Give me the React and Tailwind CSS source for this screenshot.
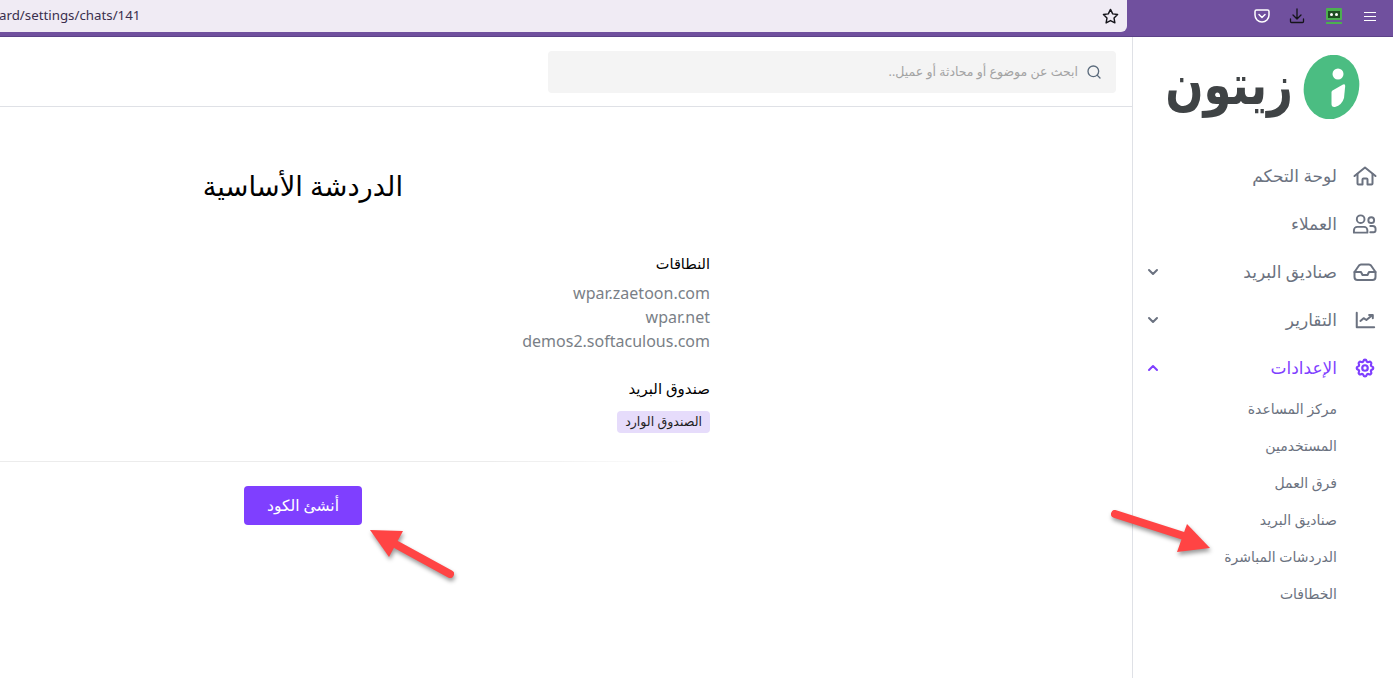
import React from "react";
import { FiSearch, FiStar, FiChevronDown, FiChevronUp } from "react-icons/fi";

function HomeIcon() {
  return (
    <svg width="24" height="20" viewBox="0 0 24 20" fill="none" stroke="currentColor" strokeWidth="2" strokeLinecap="round" strokeLinejoin="round">
      <path d="M1.500 10 12 1.500 22.500 10" />
      <path d="M4.500 8v9.500a1 1 0 0 0 1 1h4v-5a1 1 0 0 1 1-1h3a1 1 0 0 1 1 1v5h4a1 1 0 0 0 1-1V8" />
    </svg>
  );
}

function UsersIcon() {
  return (
    <svg width="26" height="24" viewBox="0 0 26 24" fill="none" stroke="currentColor" strokeWidth="2" strokeLinecap="round" strokeLinejoin="round">
      <circle cx="9" cy="7" r="4" />
      <path d="M2 21v-2.500a3.500 3.500 0 0 1 3.500-3.500h7a3.500 3.500 0 0 1 3.500 3.500V21z" />
      <circle cx="20" cy="8" r="3" />
      <path d="M19 14h2.500a3 3 0 0 1 3 3v1.500a2 2 0 0 1-2 2H19" />
    </svg>
  );
}

function InboxIcon() {
  return (
    <svg width="24" height="24" viewBox="0 0 24 24" fill="none" stroke="currentColor" strokeWidth="2" strokeLinecap="round" strokeLinejoin="round">
      <path d="M1.500 12 6 5.500A3 3 0 0 1 8 4.500h8a3 3 0 0 1 2 1L22.500 12v5a3 3 0 0 1-3 3h-15a3 3 0 0 1-3-3z" />
      <path d="M1.500 12H8l1.500 3h5l1.500-3h6.500" />
    </svg>
  );
}

function ChartIcon() {
  return (
    <svg width="22" height="22" viewBox="0 0 24 24" fill="none" stroke="currentColor" strokeWidth="2.200" strokeLinecap="round" strokeLinejoin="round">
      <path d="M3 4v16h19" />
      <path d="m7 13 3.500-3 3 2 6-5" />
      <path d="M16.500 6.500H20.500V10" />
    </svg>
  );
}

function GearIcon() {
  return (
    <svg width="22" height="22" viewBox="0 0 24 24" fill="none" stroke="currentColor" strokeWidth="2.400" strokeLinecap="round" strokeLinejoin="round">
      <path d="M10.300 4.300c.4-1.800 3-1.800 3.400 0a1.700 1.700 0 0 0 2.600 1.100c1.500-.9 3.300.8 2.400 2.400a1.700 1.700 0 0 0 1 2.600c1.800.4 1.800 3 0 3.400a1.700 1.700 0 0 0-1 2.600c.9 1.500-.9 3.300-2.400 2.400a1.700 1.700 0 0 0-2.600 1c-.4 1.800-3 1.800-3.400 0a1.700 1.700 0 0 0-2.600-1c-1.500.9-3.300-.9-2.400-2.400a1.700 1.700 0 0 0-1-2.600c-1.800-.4-1.800-3 0-3.400a1.700 1.700 0 0 0 1-2.600c-.9-1.600.9-3.300 2.400-2.400a1.700 1.700 0 0 0 2.600-1.100z" />
      <circle cx="12" cy="12" r="3" />
    </svg>
  );
}

function LogoMark() {
  return (
    <svg width="59" height="64" viewBox="0 0 59 64" className="shrink-0">
      <ellipse cx="29.500" cy="32" rx="27.500" ry="32.500" transform="rotate(14 29.500 32)" fill="#4bbd82" />
      <circle cx="36" cy="19" r="5.500" fill="#fff" />
      <path d="M30.500 35.500 41 29.500q2.300-1 2.200 1.500L42 43q-2 7-9 9-3.500.5-3.500-3V37.500q0-1.300 1-2z" fill="#fff" />
    </svg>
  );
}

function Arrow({ className, x1, y1, x2, y2, head }) {
  return (
    <svg className={className} viewBox="0 0 120 70" fill="none">
      <g style={{ filter: "drop-shadow(1px 3px 2px rgba(0,0,0,.4))" }}>
        <line x1={x1} y1={y1} x2={x2} y2={y2} stroke="#ff4444" strokeWidth="8" strokeLinecap="round" />
        <polygon points={head} fill="#ff4444" />
      </g>
    </svg>
  );
}

const mainMenu = [
  { label: "لوحة التحكم", icon: <HomeIcon /> },
  { label: "العملاء", icon: <UsersIcon /> },
  { label: "صناديق البريد", icon: <InboxIcon />, chevron: "down" },
  { label: "التقارير", icon: <ChartIcon />, chevron: "down" },
  { label: "الإعدادات", icon: <GearIcon />, chevron: "up", active: true },
];

const subMenu = ["مركز المساعدة", "المستخدمين", "فرق العمل", "صناديق البريد", "الدردشات المباشرة", "الخطافات"];

export default function App() {
  return (
    <div className="relative w-[1393px] h-[678px] overflow-hidden bg-white font-['Noto_Sans','DejaVu_Sans',sans-serif]">
      {/* browser toolbar */}
      <div className="flex h-[37px] bg-[#70509e] border-b border-[#5c4288] pb-1">
        <div className="flex-1 h-8 bg-[#f0ebf4] rounded-br-md flex items-center justify-between pr-2">
          <span className="text-[13.300px] text-[#3a2f4d] -ml-[1px]">ard/settings/chats/141</span>
          <FiStar className="text-[#15141a]" size={17} strokeWidth={2} />
        </div>
        <div className="w-[266px] h-8 flex items-center text-white">
          <svg className="ml-[127px]" width="16" height="16" viewBox="0 0 16 16" fill="none" stroke="#fff" strokeWidth="1.500" strokeLinecap="round" strokeLinejoin="round">
            <path d="M2.500 2h11a1.500 1.500 0 0 1 1.500 1.500V7a7 7 0 0 1-14 0V3.500A1.500 1.500 0 0 1 2.500 2z" />
            <path d="m5 6.500 3 3 3-3" />
          </svg>
          <svg className="ml-[19px]" width="16" height="16" viewBox="0 0 16 16" fill="none" stroke="#15141a" strokeWidth="1.300" strokeLinecap="round" strokeLinejoin="round">
            <path d="M8 1v10M4 7l4 4 4-4" />
            <path d="M1.500 11v2.500a1 1 0 0 0 1 1h11a1 1 0 0 0 1-1V11" />
          </svg>
          <svg className="ml-[21px]" width="16" height="16" viewBox="0 0 16 16">
            <rect x="0" y="0" width="16" height="12" rx="1" fill="#4caf50" />
            <rect x="2" y="3" width="12" height="7" fill="#1f4d22" />
            <circle cx="5.500" cy="6.500" r="1.500" fill="#fff" />
            <circle cx="10.500" cy="6.500" r="1.500" fill="#fff" />
            <rect x="0" y="14" width="16" height="2" fill="#4caf50" />
          </svg>
          <div className="ml-[22px] w-3 flex flex-col gap-[3px]">
            <div className="h-px bg-white" />
            <div className="h-px bg-white" />
            <div className="h-px bg-white" />
          </div>
        </div>
      </div>

      <div className="flex h-[641px]">
        {/* main area */}
        <main className="flex-1 min-w-0">
          <header className="h-[70px] border-b border-[#dfe1e6] flex justify-end pt-[14px] pr-4">
            <div className="w-[568px] h-[42px] bg-[#f4f4f4] rounded flex items-center justify-end gap-2 pr-[14px]">
              <span dir="rtl" className="text-[12.500px] text-[#a3a3a3]">ابحث عن موضوع أو محادثة أو عميل..</span>
              <FiSearch className="text-[#5b6b7c]" size={16} />
            </div>
          </header>

          <div className="flex justify-end pt-[58px] pr-[729px]">
            <h1 dir="rtl" className="text-[27.300px] leading-[42px] text-black">الدردشة الأساسية</h1>
          </div>

          <div className="flex flex-col items-end pt-[44px] pr-[422px] pb-[28px]">
            <h2 dir="rtl" className="text-[14.500px] leading-[24px] font-medium text-black">النطاقات</h2>
            <ul className="mt-[6px] text-[16px] leading-[24px] text-[#7a7f87] text-right">
              <li>wpar.zaetoon.com</li>
              <li>wpar.net</li>
              <li>demos2.softaculous.com</li>
            </ul>
            <h2 dir="rtl" className="mt-[23px] text-[15px] leading-[24px] font-medium text-black">صندوق البريد</h2>
            <span dir="rtl" className="mt-[11px] h-[22px] px-2 rounded bg-[#e6dcfb] text-[12.600px] leading-[22px] text-[#1f1f1f]">الصندوق الوارد</span>
          </div>

          <div className="h-px w-[700px] bg-gradient-to-r from-[#ececec] from-70% to-white" />

          <div className="flex justify-end pt-[24px] pr-[770px]">
            <button dir="rtl" className="w-[118px] h-[39px] rounded bg-[#7f3fff] text-white text-[15.500px]">أنشئ الكود</button>
          </div>
        </main>

        {/* sidebar */}
        <aside dir="rtl" className="w-[261px] shrink-0 border-l border-[#dfe1e6]">
          <div className="h-[111px] flex items-center gap-[9px] pr-[32px] pb-[11px]">
            <LogoMark />
            <span className="text-[45px] leading-none font-bold text-[#3f4345] font-['DejaVu_Sans',sans-serif] scale-y-125 -translate-y-[3px]">زيتون</span>
          </div>

          <nav className="pt-[4px]">
            {mainMenu.map((item) => (
              <div key={item.label} className={`h-12 flex items-center pr-[16px] ${item.active ? "text-[#7f3fff]" : "text-[#6b7280]"}`}>
                <span className="w-[25px] flex justify-center">{item.icon}</span>
                <span className="mr-[15px] text-[17px]">{item.label}</span>
                {item.chevron === "down" && <FiChevronDown className="mr-auto ml-[12px]" size={16} strokeWidth={3} />}
                {item.chevron === "up" && <FiChevronUp className="mr-auto ml-[12px]" size={16} strokeWidth={3} />}
              </div>
            ))}
          </nav>

          <ul className="-mt-[2px] pr-[56px]">
            {subMenu.map((label) => (
              <li key={label} className="h-[37px] flex items-center text-[14px] text-[#6b7280]">{label}</li>
            ))}
          </ul>
        </aside>
      </div>

      {/* annotation arrows */}
      <Arrow className="absolute left-[1100px] top-[500px] w-[120px] h-[70px]" x1={15} y1={14} x2={90} y2={38} head="87,24 110,48 77,52" />
      <Arrow className="absolute left-[360px] top-[520px] w-[120px] h-[70px]" x1={90} y1={54} x2={37} y2={25} head="10,10 43,11 29,37" />
    </div>
  );
}
